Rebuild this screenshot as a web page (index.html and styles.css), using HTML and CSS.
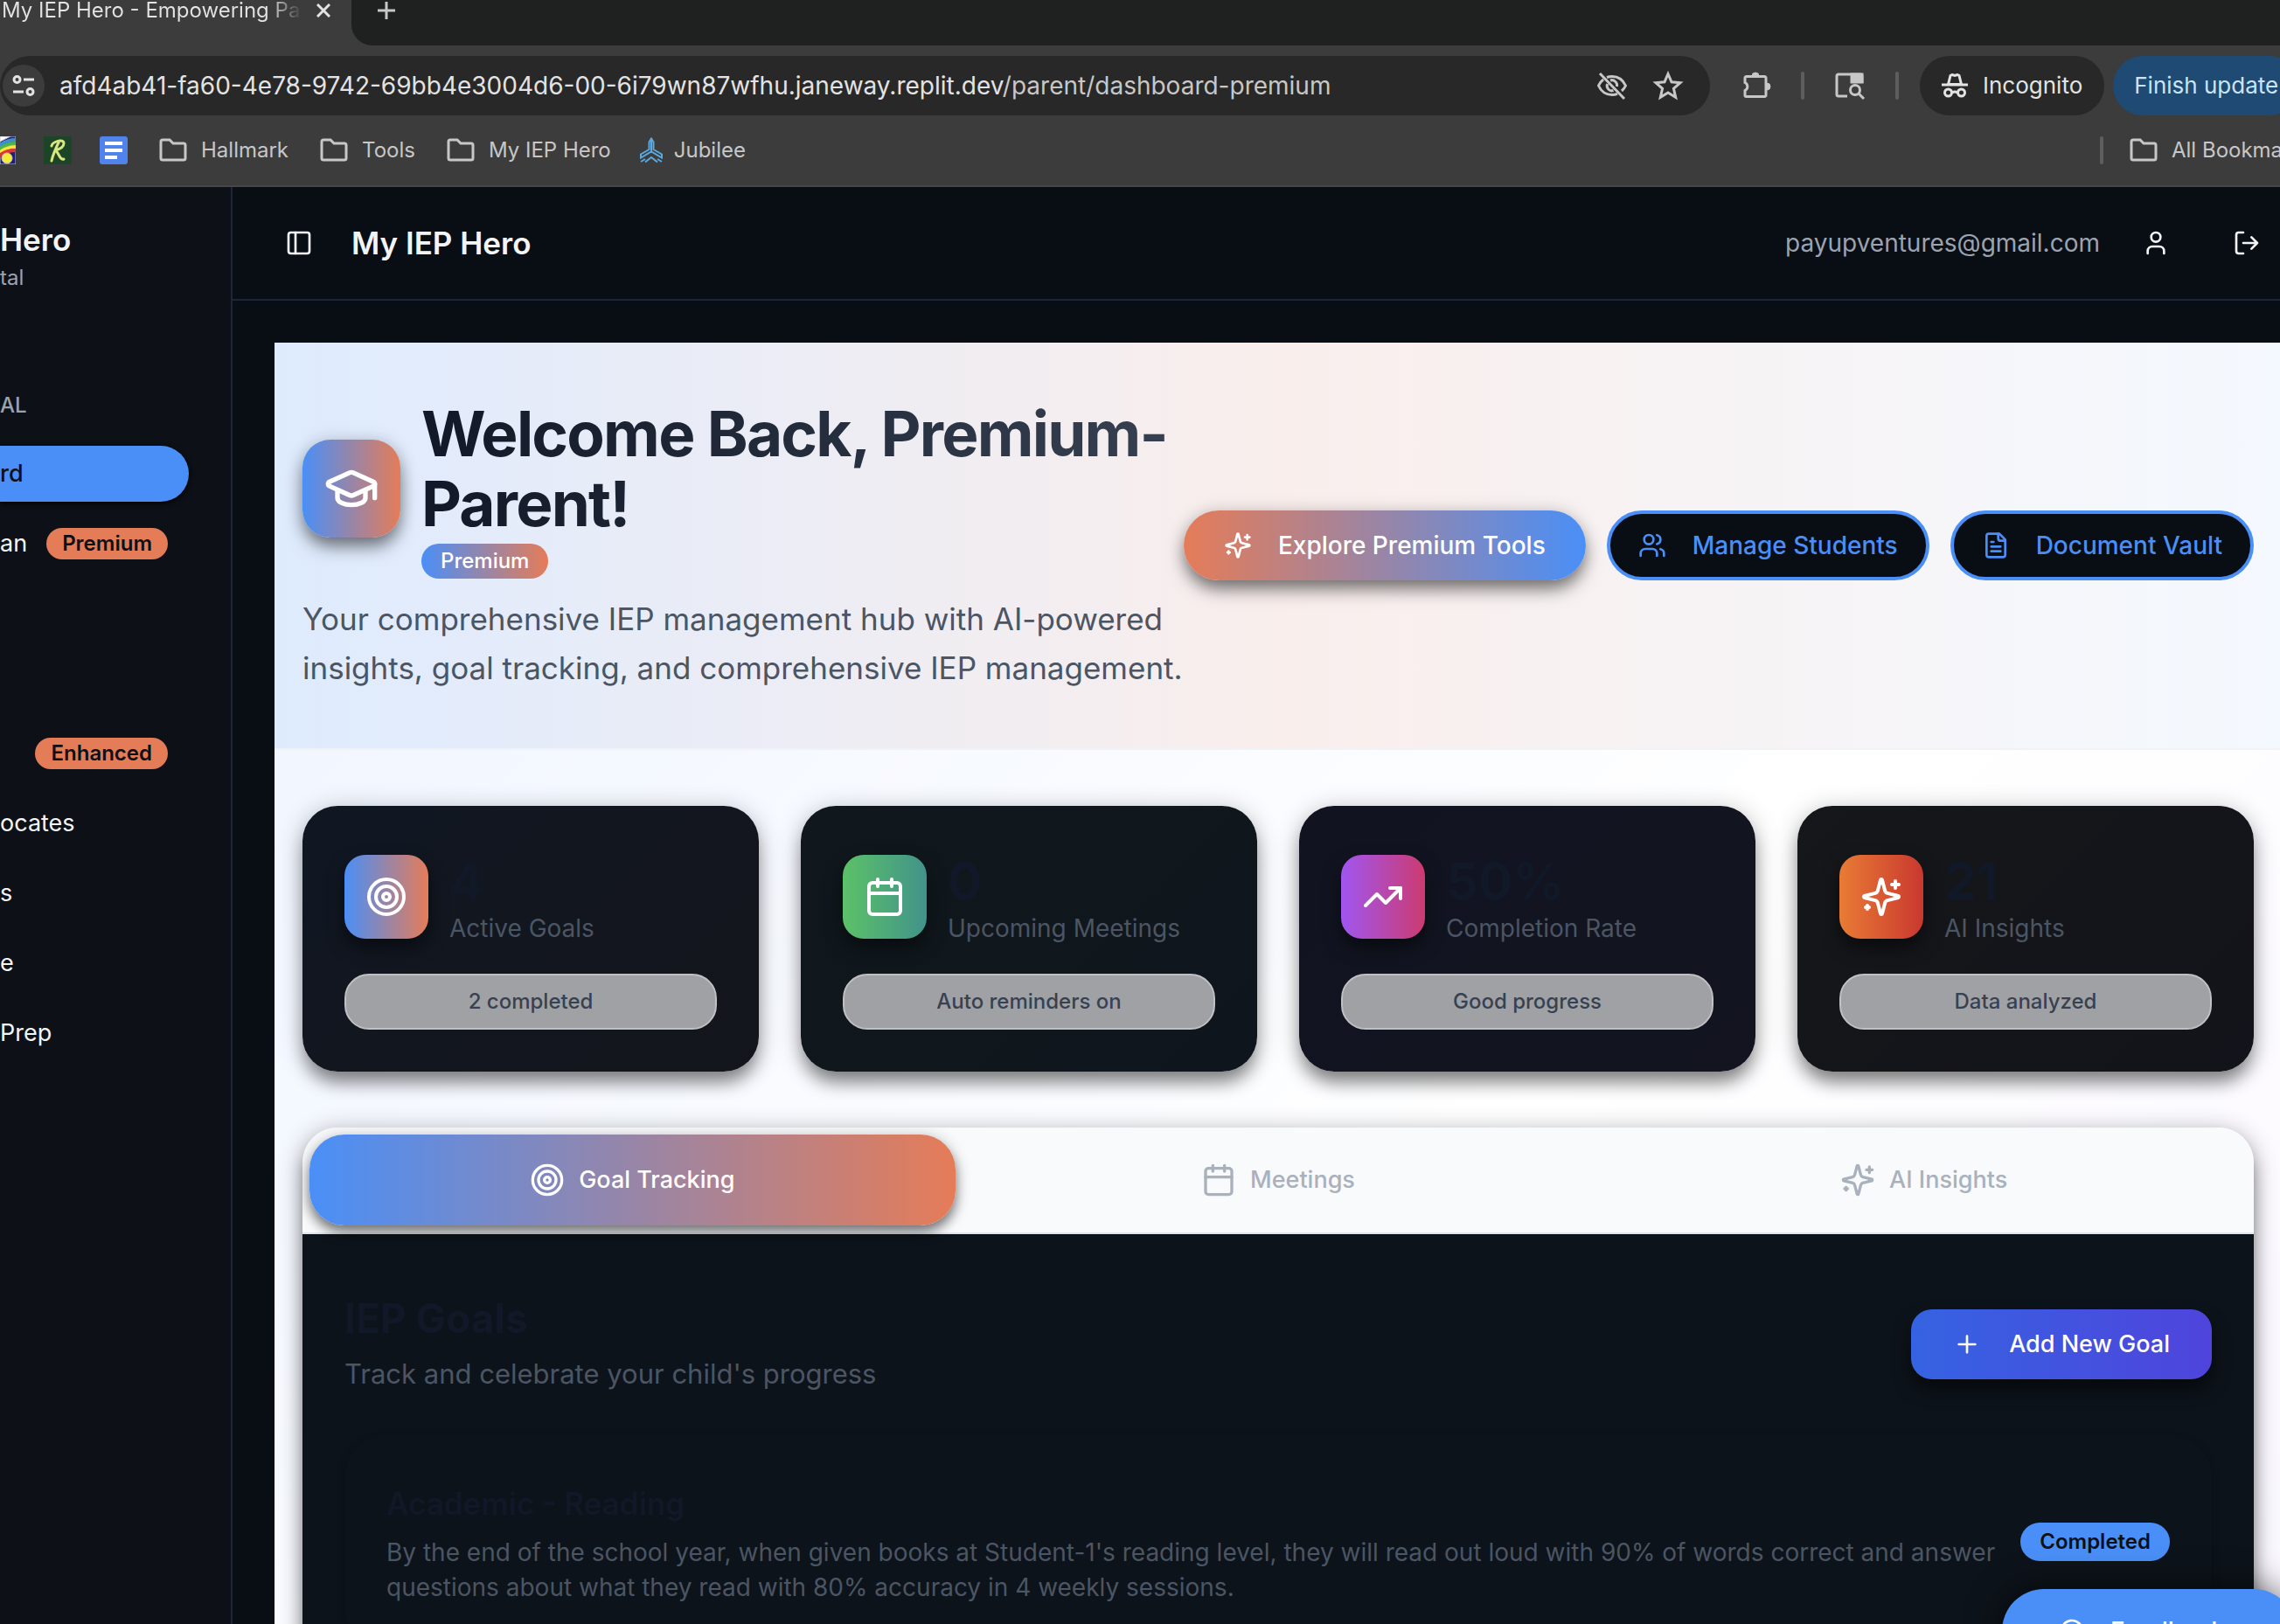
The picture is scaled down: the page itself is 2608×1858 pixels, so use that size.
FILE: index.html
```html
<!DOCTYPE html>
<html lang="en">
<head>
<meta charset="utf-8">
<title>My IEP Hero - Empowering Parents</title>
<link rel="stylesheet" href="styles.css">
</head>
<body>
<svg class="defs" aria-hidden="true">
  <symbol id="target" viewBox="0 0 24 24"><circle cx="12" cy="12" r="10"/><circle cx="12" cy="12" r="6"/><circle cx="12" cy="12" r="2"/></symbol>
  <symbol id="calendar" viewBox="0 0 24 24"><path d="M8 2v4M16 2v4M3 10h18"/><rect x="3" y="4" width="18" height="18" rx="2"/></symbol>
  <symbol id="trend" viewBox="0 0 24 24"><path d="M22 7l-8.5 8.5-5-5L2 17"/><path d="M16 7h6v6"/></symbol>
  <symbol id="sparkles" viewBox="0 0 24 24"><path d="M9.937 15.5A2 2 0 0 0 8.5 14.063l-6.135-1.582a.5.5 0 0 1 0-.962L8.5 9.936A2 2 0 0 0 9.937 8.5l1.582-6.135a.5.5 0 0 1 .963 0L14.063 8.5A2 2 0 0 0 15.5 9.937l6.135 1.581a.5.5 0 0 1 0 .964L15.5 14.063a2 2 0 0 0-1.437 1.437l-1.582 6.135a.5.5 0 0 1-.963 0z"/><path d="M20 3v4M22 5h-4M4 17v2M5 18H3"/></symbol>
  <symbol id="cap" viewBox="0 0 24 24"><path d="M21.42 10.922a1 1 0 0 0-.019-1.838L12.83 5.18a2 2 0 0 0-1.66 0L2.6 9.08a1 1 0 0 0 0 1.832l8.57 3.908a2 2 0 0 0 1.66 0z"/><path d="M22 10v6"/><path d="M6 12.5V16a6 3 0 0 0 12 0v-3.5"/></symbol>
  <symbol id="users" viewBox="0 0 24 24"><path d="M16 21v-2a4 4 0 0 0-4-4H6a4 4 0 0 0-4 4v2"/><circle cx="9" cy="7" r="4"/><path d="M22 21v-2a4 4 0 0 0-3-3.87M16 3.13a4 4 0 0 1 0 7.75"/></symbol>
  <symbol id="file" viewBox="0 0 24 24"><path d="M15 2H6a2 2 0 0 0-2 2v16a2 2 0 0 0 2 2h12a2 2 0 0 0 2-2V7z"/><path d="M14 2v4a2 2 0 0 0 2 2h4M10 9H8M16 13H8M16 17H8"/></symbol>
  <symbol id="panel" viewBox="0 0 24 24"><rect x="3" y="3" width="18" height="18" rx="2"/><path d="M9 3v18"/></symbol>
  <symbol id="user" viewBox="0 0 24 24"><path d="M19 21v-2a4 4 0 0 0-4-4H9a4 4 0 0 0-4 4v2"/><circle cx="12" cy="7" r="4"/></symbol>
  <symbol id="logout" viewBox="0 0 24 24"><path d="M9 21H5a2 2 0 0 1-2-2V5a2 2 0 0 1 2-2h4M16 17l5-5-5-5M21 12H9"/></symbol>
  <symbol id="plus" viewBox="0 0 24 24"><path d="M5 12h14M12 5v14"/></symbol>
  <symbol id="message" viewBox="0 0 24 24"><path d="M7.9 20A9 9 0 1 0 4 16.1L2 22z"/></symbol>
  <symbol id="folder" viewBox="0 0 32 28"><path d="M2 4a2 2 0 0 1 2-2h8l4 4h12a2 2 0 0 1 2 2v15a2 2 0 0 1-2 2H4a2 2 0 0 1-2-2z"/></symbol>
</svg>

<div class="window">
  <header class="chrome">
    <div class="tabstrip">
      <div class="tab">
        <span class="tab-title">My IEP Hero - Empowering Pa</span>
        <button class="plain" aria-label="Close tab"><svg class="x-icon" viewBox="0 0 16 16"><path d="M1 1l14 14M15 1L1 15"/></svg></button>
      </div>
      <div class="strip-rest">
        <button class="plain" aria-label="New tab"><svg class="newtab-icon" viewBox="0 0 20 20"><path d="M10 0v20M0 10h20"/></svg></button>
      </div>
    </div>
    <div class="toolbar">
      <div class="omnibox">
        <button class="site-info" aria-label="Site information"><svg viewBox="0 0 26 26"><circle cx="5.500" cy="6" r="3.500"/><path d="M13 6h12M1 20h12"/><circle cx="20.500" cy="20" r="3.500"/></svg></button>
        <span class="url">afd4ab41-fa60-4e78-9742-69bb4e3004d6-00-6i79wn87wfhu.janeway.replit.dev<span class="path">/parent/dashboard-premium</span></span>
        <button class="plain" aria-label="Tracking blocked"><svg class="bar-icon" viewBox="0 0 36 36"><path d="M4 4l28 29M12 8.500a17 17 0 0 1 6-1c8 0 13 5 15.500 10.500a17 17 0 0 1-4.500 6M8 11a17 17 0 0 0-5.500 7C5 23.500 10 28.500 18 28.500c2 0 4-.3 6-1.200"/><path d="M16 12c4-1.500 8.500 2.500 7.500 7M12.500 16c-1.500 5 3 9 7 7.500"/></svg></button>
        <button class="plain" aria-label="Bookmark this page"><svg class="bar-icon" viewBox="0 0 36 36"><path d="M18 4.500l4 9.300 10 .9-7.600 6.700 2.300 9.900L18 26l-8.700 5.300 2.300-9.900L4 14.700l10-.9z"/></svg></button>
      </div>
      <button class="plain ext" aria-label="Extensions"><svg class="bar-icon" viewBox="0 0 36 36"><path d="M5.500 7.500h21a1.500 1.500 0 0 1 1.500 1.500v20a1.500 1.500 0 0 1-1.500 1.500h-21A1.500 1.500 0 0 1 4 29v-5.500a5 5 0 0 0 0-9V9a1.500 1.500 0 0 1 1.500-1.500z"/><path class="solid bump" d="M12 7a4 4 0 0 1 8 0zM29 15a4 4 0 0 1 0 8z"/></svg></button>
      <span class="divider"></span>
      <button class="plain" aria-label="Search tabs"><svg class="bar-icon" viewBox="0 0 36 36"><path d="M15 30H5a2 2 0 0 1-2-2V7a2 2 0 0 1 2-2h25a2 2 0 0 1 2 2v8"/><path class="solid" d="M20 5h12v9H20z"/><circle cx="24" cy="23" r="5.500"/><path d="M28 27l6 6"/></svg></button>
      <span class="divider"></span>
      <button class="incognito"><svg class="spy" viewBox="0 0 30 28"><path d="M10 2.500l2-1 3 1 3-1 2 1 2.500 10h-15z"/><path d="M0 13h30M12 22q3-2 6 0"/><circle cx="7.500" cy="22" r="4"/><circle cx="22.500" cy="22" r="4"/></svg>Incognito</button>
      <button class="update">Finish update</button>
    </div>
    <nav class="bookmarks">
      <a href="#" aria-label="Rainbow"><svg class="rainbow" viewBox="0 0 18 32"><rect width="18" height="32" fill="#1b1f7a"/><path d="M0 0h12L0 6z" fill="#fff"/><g fill="none" stroke-width="4"><path d="M-2 12Q6 4 18 4" stroke="#3f8fd0"/><path d="M-2 16Q6 8 18 8" stroke="#4cb648"/><path d="M-2 20Q6 12 18 12" stroke="#f5e642"/><path d="M-2 24Q4 16 18 16" stroke="#e0352b"/></g><circle cx="8" cy="25" r="6" fill="#f4ea3a"/></svg></a>
      <a href="#" aria-label="R"><svg class="fav" viewBox="0 0 32 32"><rect width="32" height="32" fill="#1c4527"/><path d="M9 11c1-5 14-9 14-3 0 5-6 7-10 8 4 1 5 12 10 10M18 5c-3 6-7 14-9 23" fill="none" stroke="#d9e67e" stroke-width="3" stroke-linecap="round"/></svg></a>
      <a href="#" aria-label="Docs"><svg class="fav" viewBox="0 0 32 32"><rect width="32" height="32" rx="3" fill="#5084ec"/><path d="M6 8h20M6 16h20M6 24h14" stroke="#fff" stroke-width="4"/></svg></a>
      <a href="#"><svg class="folder"><use href="#folder"/></svg>Hallmark</a>
      <a href="#"><svg class="folder"><use href="#folder"/></svg>Tools</a>
      <a href="#"><svg class="folder"><use href="#folder"/></svg>My IEP Hero</a>
      <a href="#" class="tight"><svg class="jubilee" viewBox="0 0 28 30"><path d="M14 1.500l-2.500 4V14L2 19.500v4l12-7 12 7v-4L16.500 14V5.500zM14 2v14M2 28l5-3M26 28l-5-3M7 28.500l7-5.500 7 5.500"/></svg>Jubilee</a>
      <span class="divider push"></span>
      <a href="#" class="all"><svg class="folder"><use href="#folder"/></svg>All Bookmarks</a>
    </nav>
  </header>

  <div class="app">
    <aside class="sidebar">
      <div class="brand">Hero</div>
      <div class="brand-sub">tal</div>
      <div class="group">AL</div>
      <nav class="side-nav">
        <a href="#" class="active">rd</a>
        <a href="#">an <span class="chip">Premium</span></a>
        <a href="#"></a>
        <a href="#"></a>
        <a href="#"><span class="chip">Enhanced</span></a>
        <a href="#">ocates</a>
        <a href="#">s</a>
        <a href="#">e</a>
        <a href="#">Prep</a>
      </nav>
    </aside>

    <div class="page">
      <header class="topbar">
        <button class="plain" aria-label="Toggle sidebar"><svg class="icon sm"><use href="#panel"/></svg></button>
        <span class="app-name">My IEP Hero</span>
        <span class="email">payupventures@gmail.com</span>
        <button class="plain account" aria-label="Account"><svg class="icon sm"><use href="#user"/></svg></button>
        <button class="plain" aria-label="Log out"><svg class="icon sm"><use href="#logout"/></svg></button>
      </header>

      <main class="content">
        <section class="hero">
          <div class="hero-text">
            <div class="hero-head">
              <div class="hero-icon"><svg class="icon xl"><use href="#cap"/></svg></div>
              <div>
                <h1>Welcome Back, Premium-Parent!</h1>
                <span class="hero-badge">Premium</span>
              </div>
            </div>
            <p>Your comprehensive IEP management hub with AI-powered insights, goal tracking, and comprehensive IEP management.</p>
          </div>
          <div class="hero-actions">
            <button class="btn primary"><svg class="icon sm"><use href="#sparkles"/></svg>Explore Premium Tools</button>
            <button class="btn outline"><svg class="icon sm"><use href="#users"/></svg>Manage Students</button>
            <button class="btn outline"><svg class="icon sm"><use href="#file"/></svg>Document Vault</button>
          </div>
        </section>

        <section class="stats">
          <article class="stat goals">
            <div class="stat-head"><div class="stat-icon"><svg class="icon lg"><use href="#target"/></svg></div><div><div class="num">4</div><div class="label">Active Goals</div></div></div>
            <div class="pill">2 completed</div>
          </article>
          <article class="stat meetings">
            <div class="stat-head"><div class="stat-icon"><svg class="icon lg"><use href="#calendar"/></svg></div><div><div class="num">0</div><div class="label">Upcoming Meetings</div></div></div>
            <div class="pill">Auto reminders on</div>
          </article>
          <article class="stat rate">
            <div class="stat-head"><div class="stat-icon"><svg class="icon lg"><use href="#trend"/></svg></div><div><div class="num">50%</div><div class="label">Completion Rate</div></div></div>
            <div class="pill">Good progress</div>
          </article>
          <article class="stat ai">
            <div class="stat-head"><div class="stat-icon"><svg class="icon lg"><use href="#sparkles"/></svg></div><div><div class="num">21</div><div class="label">AI Insights</div></div></div>
            <div class="pill">Data analyzed</div>
          </article>
        </section>

        <section class="panel">
          <div class="tabs" role="tablist">
            <button role="tab" aria-selected="true" class="tab-btn on"><svg class="icon md"><use href="#target"/></svg>Goal Tracking</button>
            <button role="tab" aria-selected="false" class="tab-btn"><svg class="icon md"><use href="#calendar"/></svg>Meetings</button>
            <button role="tab" aria-selected="false" class="tab-btn"><svg class="icon md"><use href="#sparkles"/></svg>AI Insights</button>
          </div>
          <div class="panel-body">
            <div class="panel-head">
              <div><h2>IEP Goals</h2><p>Track and celebrate your child's progress</p></div>
              <button class="btn add"><svg class="icon sm"><use href="#plus"/></svg>Add New Goal</button>
            </div>
            <article class="goal">
              <div class="goal-text">
                <h3>Academic - Reading</h3>
                <p>By the end of the school year, when given books at Student-1's reading level, they will read out loud with 90% of words correct and answer questions about what they read with 80% accuracy in 4 weekly sessions.</p>
              </div>
              <span class="status">Completed</span>
            </article>
          </div>
        </section>
      </main>
    </div>
  </div>
  <button class="feedback"><svg class="icon sm"><use href="#message"/></svg>Feedback</button>
</div>
</body>
</html>
```
FILE: styles.css
```css
* { box-sizing: border-box; }
body { margin: 0; font-family: Inter, "Liberation Sans", sans-serif; font-size: 28px; line-height: 40px; background: #090d14; color: #f3f4f6; }
h1, h2, h3, p { margin: 0; }
button { font: inherit; color: inherit; border: 0; }
a { color: inherit; text-decoration: none; }
svg { fill: none; stroke: currentColor; flex: none; display: block; }
.defs { position: absolute; width: 0; height: 0; }
.window { position: relative; height: 100vh; overflow: hidden; display: flex; flex-direction: column; }
.plain { background: none; padding: 0; }
.icon { stroke-width: 2; stroke-linecap: round; stroke-linejoin: round; }
.sm { width: 32px; height: 32px; }
.md { width: 40px; height: 40px; }
.lg { width: 48px; height: 48px; }
.xl { width: 64px; height: 64px; }

/* browser chrome */
.chrome { flex: none; background: #3c3c3c; color: #c7c7c7; border-bottom: 2px solid #474747; overflow: hidden; }
.tabstrip { display: flex; height: 52px; }
.tab { width: 402px; flex: none; height: 24px; display: flex; align-items: center; gap: 16px; padding-left: 2px; color: #e3e3e3; font-size: 24px; }
.tab-title { width: 344px; overflow: hidden; white-space: nowrap; background: linear-gradient(90deg, #e3e3e3 88%, #3c3c3c); background-clip: text; color: transparent; }
.x-icon { width: 16px; height: 16px; stroke-width: 3; }
.strip-rest { flex: 1; display: flex; align-items: flex-start; background: #1f2120; border-bottom-left-radius: 24px; padding: 2px 30px; }
.newtab-icon { width: 20px; height: 20px; stroke-width: 3; }
.toolbar { display: flex; align-items: center; height: 92px; white-space: nowrap; }
.omnibox { width: 75%; flex: none; height: 68px; border-radius: 34px; background: #282828; display: flex; align-items: center; gap: 28px; padding: 0 30px 0 3px; }
.site-info { width: 48px; height: 48px; border-radius: 24px; background: #3c3c3c; padding: 11px; color: #e3e3e3; }
.site-info svg { width: 26px; height: 26px; stroke-width: 3; }
.url { flex: 1; margin-left: -11px; color: #e3e3e3; font-size: 28px; }
.path { color: #c7c7c7; }
.bar-icon { width: 36px; height: 36px; stroke-width: 3; }
.solid { fill: currentColor; }
.bump { stroke-width: 1; }
.ext { margin: 0 32px 0 36px; }
.divider { width: 4px; height: 32px; border-radius: 2px; background: #5e5e5e; flex: none; }
.divider + .plain { margin: 0 34px; }
.incognito { margin-left: 24px; height: 68px; border-radius: 34px; background: #282828; color: #e3e3e3; display: flex; align-items: center; gap: 17px; padding: 0 25px; font-size: 26px; }
.spy { width: 30px; height: 28px; stroke-width: 3; }
.update { margin-left: 10px; height: 68px; border-radius: 34px; background: #1f4a73; color: #c8e4fb; padding: 0 24px; font-size: 26px; flex: none; }
.bookmarks { display: flex; align-items: center; height: 68px; padding-bottom: 12px; gap: 36px; font-size: 24px; white-space: nowrap; }
.bookmarks a { display: flex; align-items: center; gap: 16px; flex: none; }
.fav { width: 32px; height: 32px; stroke: none; }
.bookmarks a:nth-child(2), .bookmarks a:nth-child(3) { margin-left: -4px; }
.rainbow { width: 18px; height: 32px; }
.folder { width: 32px; height: 28px; stroke-width: 3; }
.jubilee { width: 28px; height: 30px; stroke: #5aa9e0; stroke-width: 2; }
.bookmarks .tight { margin-left: -4px; gap: 12px; }
.push { margin-left: auto; }
.all { margin-left: -6px; width: 172px; }

/* sidebar */
.app { flex: 1; display: flex; min-height: 0; overflow: hidden; }
.sidebar { width: 266px; flex: none; background: #0d1117; border-right: 2px solid #1d2638; padding: 36px 48px 0 0; }
.brand { font-size: 35px; line-height: 48px; font-weight: 600; }
.brand-sub { font-size: 24px; line-height: 40px; color: #9ca3af; }
.group { font-size: 24px; line-height: 32px; color: #9ca3af; font-weight: 500; margin: 110px 0 30px; }
.side-nav { display: grid; gap: 16px; font-size: 27px; }
.side-nav a { height: 64px; border-radius: 0 32px 32px 0; padding-right: 24px; display: flex; align-items: center; justify-content: space-between; }
.side-nav a > .chip { margin-left: auto; }
.side-nav .active { background: #4a8ff7; color: #0d1117; font-weight: 500; box-shadow: 0 2px 6px #000; }
.chip { background: #e57c58; color: #0d1117; font-size: 24px; line-height: 36px; font-weight: 600; border-radius: 18px; padding: 0 18px; }

/* top bar */
.page { flex: 1; min-width: 0; }
.topbar { display: flex; align-items: center; height: 130px; border-bottom: 2px solid #1d2638; padding: 0 22px 0 60px; }
.app-name { font-size: 35px; font-weight: 600; margin-left: 44px; }
.email { margin-left: auto; color: #9ca3af; }
.account { margin: 0 72px 0 48px; }

/* content */
.content { margin: 48px 0 0 48px; background: linear-gradient(135deg, #eef4ff, #ffffff 60%, #faf7ff); }
.hero { display: flex; align-items: center; justify-content: space-between; padding: 64px 30px 64px 32px; background: linear-gradient(90deg, #deebfe, #f9eeec 50%, #f4f9ff); border-bottom: 2px solid #f0f2f6; }
.hero-text { flex: 1; min-width: 0; }
.hero-head { display: flex; align-items: center; gap: 24px; margin-bottom: 18px; }
.hero-icon { width: 112px; height: 112px; flex: none; border-radius: 32px; display: grid; place-items: center; color: #fff; background: linear-gradient(90deg, #4a8ff7, #e57c58); box-shadow: 0 12px 20px -2px rgba(0,0,0,.5), 0 0 20px rgba(0,0,0,.15); }
h1 { font-size: 71px; line-height: 80px; font-weight: 700; letter-spacing: -0.025em; margin-bottom: 6px; background: linear-gradient(90deg, #111827, #374151); background-clip: text; color: transparent; }
.hero-badge { display: block; width: fit-content; font-size: 24px; line-height: 40px; font-weight: 500; padding: 0 22px; border-radius: 20px; color: #fff; background: linear-gradient(90deg, #4a8ff7, #e57c58); }
.hero p { font-size: 35px; line-height: 56px; color: #4b5563; }
.hero-actions { display: flex; gap: 24px; flex: none; }
.btn { height: 80px; border-radius: 40px; display: flex; align-items: center; gap: 32px; padding: 0 48px; font-weight: 500; white-space: nowrap; color: #fff; flex: none; }
.hero-actions .btn { gap: 30px; padding: 0 46px; }
.primary { background: linear-gradient(90deg, #e57c58, #4a8ff7); box-shadow: 0 12px 20px -2px rgba(0,0,0,.5), 0 0 20px rgba(0,0,0,.15); }
.hero-actions .outline { background: #090d14; border: 4px solid #4a8ff7; color: #4a8ff7; padding: 0 32px; }

.stats { display: grid; grid-template-columns: repeat(4, 1fr); gap: 48px; padding: 64px 30px 64px 32px; }
.stat { border-radius: 40px; padding: 56px 48px 48px; box-shadow: 0 16px 20px -4px rgba(0,0,0,.4), 0 4px 28px rgba(0,0,0,.25); }
.goals { background: linear-gradient(135deg, #101722, #14151c); }
.meetings { background: linear-gradient(135deg, #10181c, #0f151d); }
.rate { background: linear-gradient(135deg, #111420, #131420); }
.ai { background: linear-gradient(135deg, #151719, #13131b); }
.stat-head { display: flex; gap: 24px; height: 96px; margin-bottom: 40px; }
.stat-icon { width: 96px; height: 96px; border-radius: 24px; display: grid; place-items: center; color: #fff; box-shadow: 0 10px 20px rgba(0,0,0,.5); }
.goals .stat-icon { background: linear-gradient(90deg, #4a8ff7, #e57c58); }
.meetings .stat-icon { background: linear-gradient(90deg, #5cc168, #41938a); }
.rate .stat-icon { background: linear-gradient(90deg, #a056f0, #cc3b70); }
.ai .stat-icon { background: linear-gradient(90deg, #e97b35, #c9382f); }
.num { font-size: 58px; line-height: 60px; font-weight: 700; color: #111827; }
.label { color: #4b5563; font-size: 28px; line-height: 48px; }
.pill { height: 64px; border-radius: 28px; border: 2px solid #bfc0c4; background: #a0a1a4; color: #374151; font-size: 24px; line-height: 60px; font-weight: 500; text-align: center; }

.panel { margin: 0 30px 0 32px; border-radius: 40px 40px 0 0; overflow: hidden; box-shadow: 0 16px 20px -4px rgba(0,0,0,.5), 0 4px 28px rgba(0,0,0,.3); }
.tabs { display: grid; grid-template-columns: repeat(3, 1fr); background: #f9fafc; padding: 8px; border-bottom: 2px solid #e2e5ea; }
.tab-btn { height: 104px; border-radius: 40px; background: none; color: #a9b1bd; font-size: 27px; font-weight: 500; display: flex; align-items: center; justify-content: center; gap: 16px; }
.on { color: #fff; background: linear-gradient(90deg, #4a8ff7, #e57c58); box-shadow: 0 8px 14px rgba(0,0,0,.5), 0 0 20px rgba(0,0,0,.12); }
.panel-body { background: #0d131a; padding: 64px 48px; }
.panel-head { display: flex; justify-content: space-between; align-items: center; margin-bottom: 42px; }
h2 { font-size: 46px; line-height: 64px; font-weight: 700; color: #111827; margin-bottom: 4px; }
.panel-head p { font-size: 31px; line-height: 56px; color: #4b5563; }
.add { font-size: 27px; border-radius: 24px; background: linear-gradient(90deg, #3563e2, #4f44dc); box-shadow: 0 12px 20px rgba(0,0,0,.5); }
.goal { display: flex; align-items: center; gap: 24px; padding: 50px 48px; border-radius: 48px; box-shadow: 0 2px 8px rgba(0,0,0,.25); }
.goal-text { flex: 1; }
h3 { font-size: 35px; line-height: 56px; font-weight: 600; color: #111827; margin-bottom: 8px; }
.goal p { color: #4b5563; }
.status { background: #4a8ff7; color: #0d1117; font-size: 24px; line-height: 44px; font-weight: 600; padding: 0 22px; border-radius: 22px; }
.feedback { position: absolute; right: -18px; bottom: -56px; width: 336px; height: 96px; border-radius: 48px; background: #4a8ff7; color: #fff; font-weight: 500; display: flex; align-items: center; gap: 28px; padding: 0 0 0 64px; box-shadow: 0 0 40px rgba(0,0,0,.6); }
```
